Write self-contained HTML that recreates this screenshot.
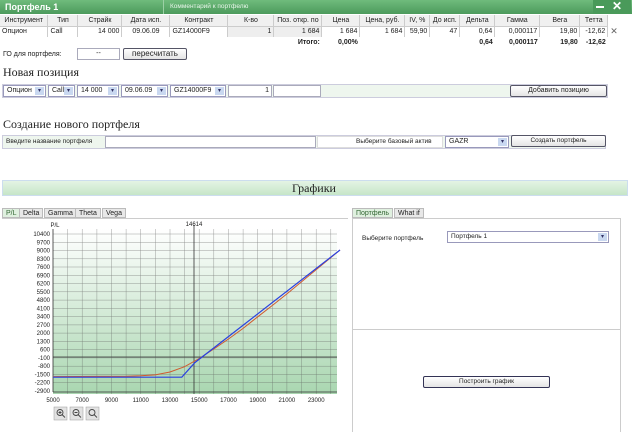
<!DOCTYPE html>
<html><head><meta charset="utf-8"><style>
*{box-sizing:border-box;margin:0;padding:0}
body{width:632px;height:432px;background:#fff;font-family:"Liberation Sans",sans-serif;font-size:7px;color:#222;position:relative;overflow:hidden}
.a{position:absolute;white-space:nowrap}
.hdr{left:0;top:0;width:632px;height:14px;background:linear-gradient(#6fbb7c,#4c9a5c)}
.row td{border-right:1px solid #ccc}
table{border-collapse:collapse;position:absolute;font-size:7px}
td{padding:0 2px;height:11px;white-space:nowrap}
.th td{background:#f0f0f0;text-align:center;border-right:1px solid #ccc;border-bottom:1px solid #ccc}
.r{text-align:right}
.inp{background:#fff;border:1px solid #aab;height:12px}
.sel{background:#fff;border:1px solid #99b;height:12px;padding-left:3px;line-height:10px}
.arr{position:absolute;right:1px;top:1px;width:9px;height:8px;background:#c9d8f0;color:#336;font-size:6px;text-align:center;line-height:8px}
.btn{border:1px solid #556;border-radius:2px;background:linear-gradient(#fff,#e4e4e4);text-align:center;line-height:10px;height:12px}
.serif{font-family:"Liberation Serif",serif;color:#222}
.tab{border:1px solid #bbb;background:#e8e8e8;height:10px;line-height:9px;padding:0 3px;top:208px}
</style></head><body>
<div class="a hdr"></div>
<div class="a" style="left:5px;top:2px;color:#fff;font-weight:bold;font-size:9px">Портфель 1</div>
<div class="a" style="left:163px;top:0;width:1px;height:14px;background:#9cd0a5"></div>
<div class="a" style="left:170px;top:3px;color:#e8f5ea;font-size:6.5px">Комментарий к портфелю</div>
<div class="a" style="left:593px;top:0;width:38px;height:14px;background:#4a9a5a"></div>
<div class="a" style="left:596px;top:6px;width:8px;height:2px;background:#fff"></div>
<div class="a" style="left:612px;top:-1px;color:#fff;font-weight:bold;font-size:12px">✕</div>

<table style="left:0;top:15px;width:620px">
<tr class="th"><td style="width:48px">Инструмент</td><td style="width:30px">Тип</td><td style="width:44px" class="r">Страйк</td><td style="width:48px">Дата исп.</td><td style="width:58px">Контракт</td><td style="width:46px" class="r">К-во</td><td style="width:48px">Поз. откр. по</td><td style="width:38px">Цена</td><td style="width:45px">Цена, руб.</td><td style="width:25px">IV, %</td><td style="width:30px">До исп.</td><td style="width:35px">Дельта</td><td style="width:45px">Гамма</td><td style="width:40px">Вега</td><td style="width:28px">Тетта</td><td style="width:12px;background:#fff;border:0"></td></tr>
<tr class="row"><td>Опцион</td><td>Call</td><td class="r">14 000</td><td style="text-align:center">09.06.09</td><td>GZ14000F9</td><td class="r" style="background:#eee">1</td><td class="r" style="background:#eee">1 684</td><td class="r">1 684</td><td class="r">1 684</td><td class="r">59,90</td><td class="r">47</td><td class="r">0,64</td><td class="r">0,000117</td><td class="r">19,80</td><td class="r">-12,62</td><td style="border:0;font-size:9px;color:#666">✕</td></tr>
<tr style="font-weight:bold"><td></td><td></td><td></td><td></td><td></td><td></td><td class="r">Итого:</td><td class="r">0,00%</td><td></td><td></td><td></td><td class="r">0,64</td><td class="r">0,000117</td><td class="r">19,80</td><td class="r">-12,62</td><td></td></tr>
</table>

<div class="a" style="left:3px;top:51px">ГО для портфеля:</div>
<div class="a inp" style="left:77px;top:48px;width:43px;text-align:center;line-height:10px">--</div>
<div class="a btn" style="left:123px;top:48px;width:64px;font-size:8px">пересчитать</div>
<div class="a serif" style="left:3px;top:65px;font-size:12px">Новая позиция</div>

<div class="a" style="left:2px;top:84px;width:606px;height:14px;background:#eef6ee;border:1px solid #ccd"></div>
<div class="a sel" style="left:3px;top:85px;width:43px">Опцион<div class="arr">▾</div></div>
<div class="a sel" style="left:48px;top:85px;width:27px">Call<div class="arr">▾</div></div>
<div class="a sel" style="left:77px;top:85px;width:42px">14 000<div class="arr">▾</div></div>
<div class="a sel" style="left:121px;top:85px;width:47px">09.06.09<div class="arr">▾</div></div>
<div class="a sel" style="left:170px;top:85px;width:56px">GZ14000F9<div class="arr">▾</div></div>
<div class="a inp" style="left:228px;top:85px;width:44px;text-align:right;padding-right:2px;line-height:10px">1</div>
<div class="a inp" style="left:273px;top:85px;width:48px"></div>
<div class="a btn" style="left:510px;top:85px;width:97px">Добавить позицию</div>

<div class="a serif" style="left:3px;top:117px;font-size:12px">Создание нового портфеля</div>
<div class="a" style="left:2px;top:135px;width:604px;height:14px;background:#eef6ee;border:1px solid #ccd"></div>
<div class="a" style="left:6px;top:138px;font-size:6.5px">Введите название портфеля</div>
<div class="a inp" style="left:105px;top:136px;width:211px"></div>
<div class="a inp" style="left:317px;top:136px;width:126px;border-color:#ddd"></div>
<div class="a" style="left:356px;top:138px;font-size:6.5px">Выберите базовый актив</div>
<div class="a sel" style="left:445px;top:136px;width:64px">GAZR<div class="arr">▾</div></div>
<div class="a btn" style="left:511px;top:135px;width:95px;font-size:6.5px">Создать портфель</div>

<div class="a" style="left:2px;top:180px;width:626px;height:16px;background:linear-gradient(#e4f4e4,#c6e6c8);border:1px solid #cde"></div>
<div class="a serif" style="left:292px;top:181px;font-size:12px">Графики</div>

<div class="a tab" style="left:2px;background:#dff0df;color:#363">P/L</div>
<div class="a tab" style="left:19px">Delta</div>
<div class="a tab" style="left:44px">Gamma</div>
<div class="a tab" style="left:75px">Theta</div>
<div class="a tab" style="left:102px">Vega</div>
<div class="a" style="left:2px;top:218px;width:346px;height:1px;background:#ccc"></div>

<div class="a tab" style="left:352px;background:#dff0df;color:#363">Портфель</div>
<div class="a tab" style="left:394px">What if</div>
<div class="a" style="left:352px;top:218px;width:269px;height:214px;border:1px solid #ccc;border-bottom:0"></div>
<div class="a" style="left:352px;top:329px;width:269px;height:1px;background:#ccc"></div>
<div class="a" style="left:362px;top:235px;font-size:6.5px">Выберите портфель</div>
<div class="a sel" style="left:447px;top:231px;width:162px;font-size:6.5px">Портфель 1<div class="arr">▾</div></div>
<div class="a btn" style="left:423px;top:376px;width:127px;border-color:#335;font-size:6.5px">Построить график</div>

<svg class="a" style="left:0;top:219px" width="350" height="213" viewBox="0 219 350 213">
<defs><linearGradient id="g" x1="0" y1="0" x2="0" y2="1"><stop offset="0" stop-color="#fff"/><stop offset="1" stop-color="#a9d6b0"/></linearGradient></defs>
<rect x="53" y="229" width="284" height="165" fill="url(#g)"/>
<g stroke="#555" stroke-width="0.4" opacity="0.7">
<path d="M67.6 229V394M82.2 229V394M96.9 229V394M111.5 229V394M126.1 229V394M140.7 229V394M155.3 229V394M170 229V394M184.6 229V394M199.2 229V394M213.8 229V394M228.5 229V394M243.1 229V394M257.7 229V394M272.3 229V394M286.9 229V394M301.6 229V394M316.2 229V394M330.8 229V394"/>
<path d="M53 234H337M53 242.3H337M53 250.5H337M53 258.8H337M53 267H337M53 275.3H337M53 283.6H337M53 291.8H337M53 300.1H337M53 308.3H337M53 316.6H337M53 324.9H337M53 333.1H337M53 341.4H337M53 349.6H337M53 357.9H337M53 366.2H337M53 374.4H337M53 382.7H337"/>
</g>
<path d="M53 229V392M53 392H337M53 357H337M194 225V394" stroke="#333" stroke-width="0.8" fill="none"/>
<polyline points="53,376.6 126.1,376.3 140.7,375.8 155.3,374.9 170,372 184.6,366.7 199.2,358.5 213.8,349 228.5,339 243.1,328.4 257.7,316.8 272.3,305.5 286.9,293.9 340,250" fill="none" stroke="#d05a30" stroke-width="1"/>
<polyline points="53,377.2 181.8,377.2 195,362.5 340,250" fill="none" stroke="#2a40e0" stroke-width="1.2"/>
<g font-family="Liberation Sans" font-size="6" fill="#222" text-anchor="end">
<text x="50" y="236">10400</text><text x="50" y="244.3">9700</text><text x="50" y="252.5">9000</text><text x="50" y="260.8">8300</text><text x="50" y="269">7600</text><text x="50" y="277.3">6900</text><text x="50" y="285.6">6200</text><text x="50" y="293.8">5500</text><text x="50" y="302.1">4800</text><text x="50" y="310.3">4100</text><text x="50" y="318.6">3400</text><text x="50" y="326.9">2700</text><text x="50" y="335.1">2000</text><text x="50" y="343.4">1300</text><text x="50" y="351.6">600</text><text x="50" y="359.9">-100</text><text x="50" y="368.2">-800</text><text x="50" y="376.4">-1500</text><text x="50" y="384.7">-2200</text><text x="50" y="393">-2900</text>
</g>
<g font-family="Liberation Sans" font-size="6" fill="#222" text-anchor="middle">
<text x="53" y="402">5000</text><text x="82.2" y="402">7000</text><text x="111.5" y="402">9000</text><text x="140.7" y="402">11000</text><text x="170" y="402">13000</text><text x="199.2" y="402">15000</text><text x="228.5" y="402">17000</text><text x="257.7" y="402">19000</text><text x="286.9" y="402">21000</text><text x="316.2" y="402">23000</text>
<text x="194" y="226">14614</text><text x="55" y="227">P/L</text>
</g>
<g fill="#e2e2e2" stroke="#999" stroke-width="0.5">
<rect x="54" y="407" width="13" height="13"/><rect x="70" y="407" width="13" height="13"/><rect x="86" y="407" width="13" height="13"/>
</g>
<g fill="none" stroke="#444" stroke-width="0.9">
<circle cx="60" cy="412.5" r="3"/><path d="M62 414.5l3 3M58.5 412.5h3M60 411v3"/>
<circle cx="76" cy="412.5" r="3"/><path d="M78 414.5l3 3M74.5 412.5h3"/>
<circle cx="92" cy="412.5" r="3"/><path d="M94 414.5l3 3"/>
</g>
</svg>
</body></html>
